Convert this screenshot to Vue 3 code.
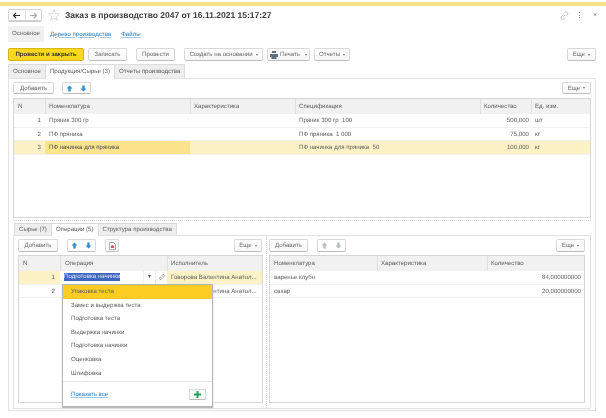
<script setup>
const rows = [
  { n: 1, name: 'Пряник 300 гр', spec: 'Пряник 300 гр  100', qty: '500,000', unit: 'шт' },
  { n: 2, name: 'ПФ пряника', spec: 'ПФ пряника  1 000', qty: '75,000', unit: 'кг' },
  { n: 3, name: 'ПФ начинка для пряника', spec: 'ПФ начинка для пряника  50', qty: '100,000', unit: 'кг', active: true }
]
const materials = [
  { name: 'варенье клубн', qty: '84,000000000' },
  { name: 'сахар', qty: '20,000000000' }
]
const options = ['Замес и выдержка теста', 'Подготовка теста', 'Выдержка начинки', 'Подготовка начинки', 'Оценковка', 'Шлифовка']
</script>

<template>
  <div class="page">
    <div class="topband"></div>
    <div class="window">
      <header class="title-row">
        <div class="nav">
          <span class="nav-cell"><svg width="9" height="7" viewBox="0 0 9 7"><path d="M8 3.500H2M4 1 1.500 3.500 4 6" fill="none" stroke="#333" stroke-width="1.200"/></svg></span>
          <span class="nav-cell dim"><svg width="9" height="7" viewBox="0 0 9 7"><path d="M1 3.500h6M5 1l2.500 2.500L5 6" fill="none" stroke="#aaa" stroke-width="1.200"/></svg></span>
        </div>
        <svg class="star" width="12" height="12" viewBox="0 0 12 12"><path d="M6 .8 7.500 4.500l4 .3-3 2.600.9 3.900L6 9.200l-3.400 2.100.9-3.900-3-2.600 4-.3z" fill="#fff" stroke="#d0d0d0" stroke-width=".8"/></svg>
        <h1>Заказ в производство 2047 от 16.11.2021 15:17:27</h1>
        <div class="win-tools">
          <svg width="9" height="9" viewBox="0 0 9 9"><path d="M3.500 5.500 5.500 3.500M4 2.500l1-1.200a1.500 1.500 0 0 1 2.400 2.300L6.400 4.600M5 6.500 4 7.700A1.500 1.500 0 0 1 1.400 5.400l1.100-1" fill="none" stroke="#aaa" stroke-width=".7"/></svg>
          <span class="dots"></span>
          <span class="close">×</span>
        </div>
      </header>

      <nav class="sections">
        <span class="section on">Основное</span>
        <a class="link">Дерево производства</a>
        <a class="link">Файлы</a>
      </nav>

      <div class="cmdbar">
        <button class="btn primary">Провести и закрыть</button>
        <button class="btn w39">Записать</button>
        <button class="btn w39 ml5">Провести</button>
        <button class="btn w79 ml5">Создать на основании<i class="caret"></i></button>
        <button class="btn w43">
          <svg width="8" height="8" viewBox="0 0 8 8"><path d="M2 0h4v2H2zM0 3h8v3H6.500v2h-5V6H0z" fill="#5b7184"/></svg>Печать<i class="caret"></i>
        </button>
        <button class="btn w36">Отчеты<i class="caret"></i></button>
        <button class="btn more push">Еще<i class="caret"></i></button>
      </div>

      <div class="tabs">
        <span class="tab">Основное</span>
        <span class="tab on">Продукция/Сырье (3)</span>
        <span class="tab">Отчеты производства</span>
      </div>

      <section class="panel main">
        <div class="toolbar small">
          <button class="btn add">Добавить</button>
          <div class="arrows a8">
            <span><svg width="7" height="7" viewBox="0 0 7 7"><path d="M3.500 .5 6.500 3.500H4.700V6.500H2.300V3.500H.5z" fill="#2f8fd0"/></svg></span>
            <span><svg width="7" height="7" viewBox="0 0 7 7"><path d="M3.500 6.500 .5 3.500H2.300V.5H4.700V3.500H6.500z" fill="#2f8fd0"/></svg></span>
          </div>
          <button class="btn more push">Еще<i class="caret"></i></button>
        </div>

        <div class="table t-top">
          <div class="row head">
            <span class="c n">N</span>
            <span class="c name">Номенклатура</span>
            <span class="c chr">Характеристика</span>
            <span class="c spec">Спецификация</span>
            <span class="c qty">Количество</span>
            <span class="c unit">Ед. изм.</span>
          </div>
          <div v-for="r in rows" :key="r.n" class="row body" :class="{ active: r.active }">
            <span class="c n num">{{ r.n }}</span>
            <span class="c name" :class="{ current: r.active }">{{ r.name }}</span>
            <span class="c chr"></span>
            <span class="c spec">{{ r.spec }}</span>
            <span class="c qty num">{{ r.qty }}</span>
            <span class="c unit">{{ r.unit }}</span>
          </div>
        </div>

        <div class="splitter"></div>

        <div class="tabs inner">
          <span class="tab">Сырье (7)</span>
          <span class="tab on">Операции (5)</span>
          <span class="tab">Структура производства</span>
        </div>

        <div class="panel frame">
          <div class="ops">
            <div class="toolbar">
              <button class="btn add2">Добавить</button>
              <div class="arrows">
                <span><svg width="7" height="7" viewBox="0 0 7 7"><path d="M3.500 .5 6.500 3.500H4.700V6.500H2.300V3.500H.5z" fill="#2f8fd0"/></svg></span>
                <span><svg width="7" height="7" viewBox="0 0 7 7"><path d="M3.500 6.500 .5 3.500H2.300V.5H4.700V3.500H6.500z" fill="#2f8fd0"/></svg></span>
              </div>
              <button class="btn doc"><svg width="7" height="8" viewBox="0 0 7 8"><path d="M.5.5h4l2 2v5h-6z" fill="#fff" stroke="#888" stroke-width=".7"/><path d="M2 3.500h3v2.500H2z" fill="#c55"/></svg></button>
              <button class="btn more28 push">Еще<i class="caret"></i></button>
            </div>
            <div class="table t-low">
              <div class="row head">
                <span class="c on-n">N</span>
                <span class="c on-op">Операция</span>
                <span class="c on-ex">Исполнитель</span>
              </div>
              <div class="row body active">
                <span class="c on-n num">1</span>
                <span class="c on-op editor">
                  <span class="sel">Подготовка начинки</span>
                  <i class="ed-btn">▾</i>
                  <i class="ed-btn link-ic"><svg width="6" height="6" viewBox="0 0 6 6"><path d="M2.500 3.500 3.500 2.500M2.800 1.700l.7-.8a1 1 0 0 1 1.600 1.600l-.8.7M3.200 4.300l-.7.8A1 1 0 0 1 .9 3.500l.8-.7" fill="none" stroke="#666" stroke-width=".6"/></svg></i>
                </span>
                <span class="c on-ex">Говорова Валентина Анатол...</span>
              </div>
              <div class="row body">
                <span class="c on-n num">2</span>
                <span class="c on-op"></span>
                <span class="c on-ex">Говорова Валентина Анатол...</span>
              </div>
            </div>
          </div>

          <div class="divider"></div>

          <div class="mats">
            <div class="toolbar">
              <button class="btn add2">Добавить</button>
              <div class="arrows">
                <span><svg width="7" height="7" viewBox="0 0 7 7"><path d="M3.500 .5 6.500 3.500H4.700V6.500H2.300V3.500H.5z" fill="#b5bdc4"/></svg></span>
                <span><svg width="7" height="7" viewBox="0 0 7 7"><path d="M3.500 6.500 .5 3.500H2.300V.5H4.700V3.500H6.500z" fill="#b5bdc4"/></svg></span>
              </div>
              <button class="btn more push">Еще<i class="caret"></i></button>
            </div>
            <div class="table t-low">
              <div class="row head">
                <span class="c m-name">Номенклатура</span>
                <span class="c m-chr">Характеристика</span>
                <span class="c m-qty">Количество</span>
              </div>
              <div v-for="m in materials" :key="m.name" class="row body">
                <span class="c m-name">{{ m.name }}</span>
                <span class="c m-chr"></span>
                <span class="c m-qty num">{{ m.qty }}</span>
              </div>
            </div>
          </div>
        </div>
      </section>
    </div>

    <div class="dropdown">
      <div class="opt hot">Упаковка теста</div>
      <div v-for="o in options" :key="o" class="opt">{{ o }}</div>
      <div class="dd-foot">
        <a class="link">Показать все</a>
        <button class="plus"><svg width="7" height="7" viewBox="0 0 7 7"><path d="M2.500 0h2v2.500H7v2H4.500V7h-2V4.500H0v-2h2.500z" fill="#1fa35c"/></svg></button>
      </div>
    </div>
  </div>
</template>

<style scoped>
.page {
  position: relative;
  width: 606px;
  height: 418px;
  overflow: hidden;
  background: #fff;
  font-family: "Liberation Sans", Arial, sans-serif;
  font-size: 6.100px;
  text-rendering: geometricPrecision;
  color: #5e5e5e;
  filter: blur(0.3px);
}
.topband { height: 3.500px; margin-top: 2px; background: #f8e38a; }
.window { display: flex; flex-direction: column; padding: 0 10px 0 8px; }

.title-row { display: flex; align-items: center; height: 16px; margin-top: 1.500px; }
.nav { display: flex; width: 34px; height: 12px; border: 1px solid #d5d5d5; border-radius: 2px; box-sizing: border-box; box-shadow: 0 1px 0 #ccc; }
.nav-cell { flex: 1; display: flex; align-items: center; justify-content: center; }
.nav-cell.dim { border-left: 1px solid #e2e2e2; }
.star { margin-left: 6px; }
h1 { margin: 0 0 0 5px; font-size: 8.500px; font-weight: 700; color: #3a3a3a; white-space: nowrap; }
.win-tools { margin-left: auto; display: flex; align-items: center; gap: 10px; margin-right: -1px; }
.dots { width: 1px; height: 6px; margin-right: 3px; background: repeating-linear-gradient(#888 0 1px, transparent 1px 2.500px); }
.close { font-size: 7px; color: #888; line-height: 1; }

.sections { display: flex; align-items: center; height: 16px; margin-top: 3px; }
.section.on { width: 36px; height: 16px; line-height: 16px; text-align: center; background: #f0f0f0; }
.link { color: #2a7ec0; text-decoration: underline; text-decoration-color: #9cc6e4; }
.sections .link { margin-left: 6px; }
.sections .link + .link { margin-left: 10px; }

.btn {
  box-sizing: border-box;
  height: 13px;
  padding: 0;
  font: inherit;
  text-rendering: inherit;
  color: #6a6a6a;
  background: linear-gradient(#fff, #f6f6f6);
  border: 1px solid #d9d9d9;
  border-bottom-color: #bdbdbd;
  border-radius: 2px;
  display: inline-flex;
  align-items: center;
  justify-content: center;
  white-space: nowrap;
}
.caret { width: 0; height: 0; margin-left: 3px; border: 1.500px solid transparent; border-top: 2px solid #777; border-bottom: 0; }
.cmdbar { display: flex; gap: 4px; height: 13px; margin-top: 6px; }
.primary { width: 76px; background: #fbd71f; border-color: #d8b414; color: #333; font-weight: 700; }
.w39 { width: 39px; }
.ml5 { margin-left: 5px; }
.w79 { width: 79px; }
.w43 { width: 43px; gap: 2px; }
.w36 { width: 36px; }
.more { width: 29px; }
.more28 { width: 28px; margin-right: 1px; }
.push { margin-left: auto; }

.tabs { display: flex; height: 14px; margin-top: 3px; }
.tab { box-sizing: border-box; padding: 0 4px; line-height: 13px; background: #eeeeee; border: 1px solid #dcdcdc; border-bottom: 0; white-space: nowrap; margin-right: -1px; }
.tab.on { background: #fff; height: 15px; z-index: 1; }

.panel { border: 1px solid #e2e2e2; box-sizing: border-box; background: #fff; }
.panel.main { height: 333px; padding: 3px 4px 0 4px; display: flex; flex-direction: column; }
.toolbar { display: flex; align-items: center; height: 13px; }
.toolbar.small { height: 12px; }
.toolbar.small .btn { height: 12px; }
.add { width: 41px; }
.add2 { width: 39px; }
.ops .add2 { width: 40px; }
.arrows { display: flex; width: 29px; height: 13px; margin-left: 9px; box-sizing: border-box; border: 1px solid #d9d9d9; border-bottom-color: #bdbdbd; border-radius: 2px; }
.arrows.a8 { margin-left: 8px; height: 12px; }
.arrows span { flex: 1; display: flex; align-items: center; justify-content: center; }
.doc { width: 14px; margin-left: 9px; }

.table { box-sizing: border-box; border: 1px solid #d6d6d6; background: #fff; overflow: hidden; }
.t-top { height: 120px; margin-top: 4px; }
.t-low { height: 148px; margin-top: 3px; }
.row { display: flex; box-sizing: border-box; }
.head { height: 15px; background: #f1f1f1; align-items: center; }
.head .c { line-height: 15px; border-left: 1px solid #e0e0e0; padding-left: 3px; }
.head .c:first-child { border-left: 0; }
.body { height: 13.600px; align-items: center; border-bottom: 1px solid #f0f0f0; }
.c { box-sizing: border-box; display: block; height: 100%; line-height: 13px; padding: 0 3px; white-space: nowrap; overflow: hidden; }
.num { text-align: right; }
.n { width: 31px; padding-right: 4px; }
.head .n { text-align: left; padding-left: 4px; }
.name { width: 145px; padding-left: 4px; }
.chr { width: 105px; }
.spec { width: 185px; padding-left: 4px; white-space: pre; }
.qty { width: 51px; padding-right: 2px; }
.unit { flex: 1; padding-left: 4px; }
.active { background: #fdf2c6; }
.current { background: #fde38c; color: #4a4a4a; }

.splitter { height: 2px; margin-top: 2px; border-top: 1px dotted #dcdcdc; }
.tabs.inner { margin: 0 0 0 1px; height: 12px; }
.tabs.inner .tab { line-height: 11px; }
.tabs.inner .tab.on { height: 13px; }
.panel.frame { display: flex; height: 174px; padding: 3px 5px 0 4px; }
.ops { width: 245px; flex: none; }
.divider { width: 0; margin: 0 2.500px; border-left: 1px dotted #d5d5d5; margin-top: -3px; }
.mats { flex: 1; min-width: 0; }
.on-n { width: 41px; padding-right: 5px; }
.head .on-n { padding-left: 4px; text-align: left; }
.on-op { width: 107px; padding-left: 4px; }
.head .on-op { padding-left: 4px; }
.on-ex { flex: 1; padding-left: 4px; }
.body .on-ex { padding-right: 0; }
.editor { display: flex; align-items: center; padding: 0 0 0 4px; background: #fff; }
.sel { background: #3f67c0; color: #dfe6f7; line-height: 8px; }
.ed-btn { flex: none; width: 11px; height: 100%; display: flex; align-items: center; justify-content: center; font-style: normal; font-size: 6px; color: #555; border-left: 1px solid #eee; margin-left: auto; }
.ed-btn.link-ic { margin-left: 0; }
.m-name { width: 107px; padding-left: 4px; }
.head .m-name { padding-left: 4px; }
.m-chr { width: 110px; }
.m-qty { flex: 1; }

.dropdown {
  position: absolute;
  left: 62px;
  top: 284px;
  width: 151px;
  box-sizing: border-box;
  background: #fff;
  border: 1px solid #b5b5b5;
  box-shadow: 0 1px 1px #bbb;
}
.opt { height: 13.600px; line-height: 13.600px; padding-left: 8px; white-space: nowrap; }
.hot { background: #fbcd22; }
.dd-foot { display: flex; align-items: center; justify-content: space-between; height: 24px; margin-top: 1px; padding: 0 6px 0 8px; border-top: 1px solid #e6e6e6; }
.plus { width: 17px; height: 11px; padding: 0; display: flex; align-items: center; justify-content: center; background: #fafafa; border: 1px solid #d9d9d9; border-bottom-color: #bbb; border-radius: 1px; }
</style>
